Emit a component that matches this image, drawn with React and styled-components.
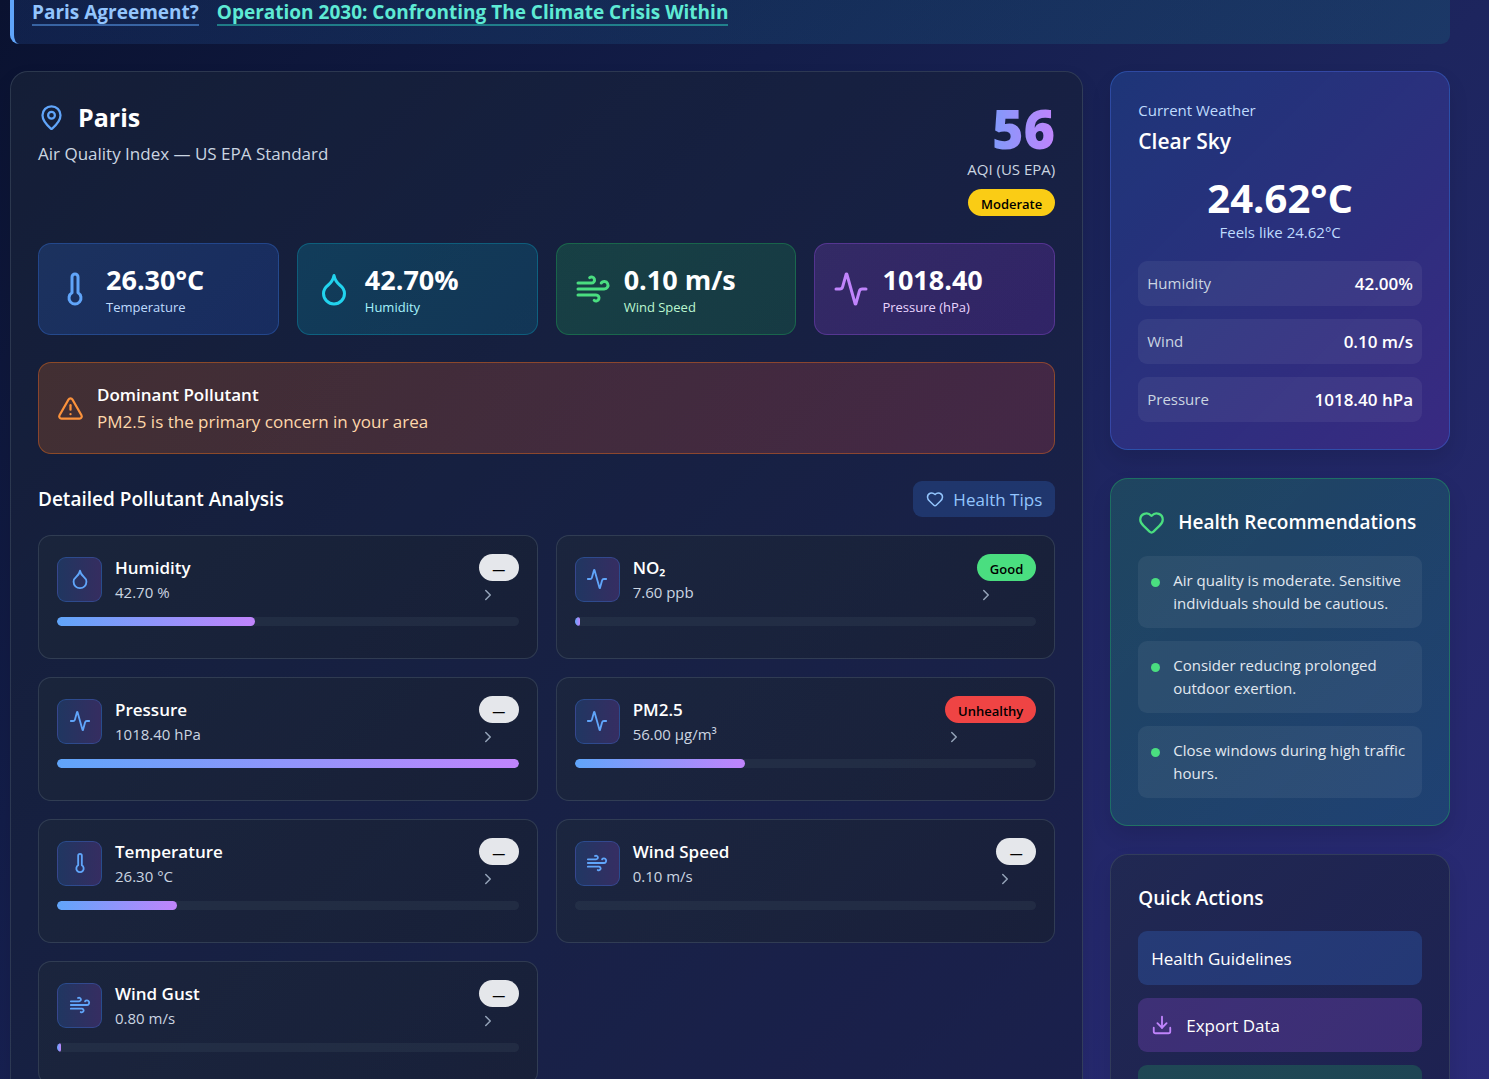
import React from "react";
import styled, { createGlobalStyle, css } from "styled-components";
import {
  Activity,
  ChevronRight,
  Download,
  Droplet,
  Heart,
  MapPin,
  Thermometer,
  TriangleAlert,
  Wind,
} from "lucide-react";

const GlobalStyle = createGlobalStyle`
  *, *::before, *::after { box-sizing: border-box; }
  body {
    margin: 0;
    background: #0a1230;
    color: #fff;
    font-family: "Segoe UI", "Open Sans", "Noto Sans", sans-serif;
    font-size: 17px;
    line-height: 27px;
  }
  h1, h2, h3, p, ul, dl, dd { margin: 0; padding: 0; }
  ul { list-style: none; }
  button { font: inherit; border: 0; cursor: pointer; }
  svg { flex: none; display: block; }
`;

const Page = styled.div`
  height: 100vh;
  overflow: hidden;
  padding: 0 39px 0 10px;
  background: linear-gradient(135deg, #0a1230 0%, #131d49 32%, #1d255e 58%, #2b2b78 100%);
`;

const Banner = styled.nav`
  display: flex;
  gap: 18px;
  padding: 0 18px 18px;
  margin-bottom: 27px;
  border-left: 4px solid #60a5fa;
  border-radius: 0 0 9px 9px;
  background: linear-gradient(90deg, rgba(59, 130, 246, 0.13), rgba(20, 184, 166, 0.13));
`;

const BannerLink = styled.a`
  color: ${(p) => p.$color};
  border-bottom: 2px solid ${(p) => p.$line};
  font-size: 19px;
  line-height: 24px;
  font-weight: 700;
  text-decoration: none;
`;

const Layout = styled.main`
  display: grid;
  grid-template-columns: repeat(4, minmax(0, 1fr));
  gap: 27px;
  align-items: start;
`;

const Card = styled.section`
  padding: 27px;
  border: 1px solid ${(p) => p.$border};
  border-radius: 18px;
  background: linear-gradient(135deg, ${(p) => p.$from}, ${(p) => p.$to});
  box-shadow: 0 10px 20px rgba(0, 0, 0, 0.1);
`;

const slate = {
  $border: "rgba(71, 85, 105, 0.5)",
  $from: "rgba(30, 41, 59, 0.5)",
  $to: "rgba(15, 23, 42, 0.5)",
};

const MainCard = styled(Card)`
  grid-column: span 3;
`;

const Sidebar = styled.aside`
  display: flex;
  flex-direction: column;
  gap: 28px;
`;

const Header = styled.header`
  display: flex;
  justify-content: space-between;
  align-items: flex-start;
  margin-bottom: 27px;
`;

const City = styled.h1`
  display: flex;
  align-items: center;
  gap: 13px;
  margin-bottom: 5px;
  font-size: 25px;
  line-height: 36px;
  font-weight: 700;
  svg { color: #60a5fa; }
`;

const Subtitle = styled.p`
  color: #cbd5e1;
`;

const Score = styled.div`
  display: flex;
  flex-direction: column;
  align-items: flex-end;
`;

const ScoreValue = styled.div`
  font-size: 54px;
  line-height: 58px;
  font-weight: 800;
  background: linear-gradient(90deg, #60a5fa -50%, #c084fc 100%);
  background-clip: text;
  -webkit-background-clip: text;
  color: transparent;
`;

const ScoreLabel = styled.div`
  color: #cbd5e1;
  font-size: 15px;
  line-height: 24px;
  margin-bottom: 8px;
`;

const badgeTones = {
  moderate: "#facc15",
  good: "#4ade80",
  unhealthy: "#ef4444",
  none: "#e5e7eb",
};

const Badge = styled.span`
  display: inline-flex;
  align-items: center;
  justify-content: center;
  min-width: 40px;
  height: 27px;
  padding: 2px 13px 0;
  border-radius: 14px;
  background: ${(p) => badgeTones[p.$tone]};
  color: #000;
  font-size: 13px;
  line-height: 18px;
  font-weight: 600;
`;

const StatGrid = styled.div`
  display: grid;
  grid-template-columns: repeat(4, minmax(0, 1fr));
  gap: 18px;
  margin-bottom: 27px;
`;

const stats = {
  blue: ["59, 130, 246", "37, 99, 235", "#60a5fa", "#bfdbfe"],
  cyan: ["6, 182, 212", "8, 145, 178", "#22d3ee", "#a5f3fc"],
  green: ["34, 197, 94", "22, 163, 74", "#4ade80", "#bbf7d0"],
  purple: ["168, 85, 247", "147, 51, 234", "#c084fc", "#e9d5ff"],
};

const Stat = styled.div`
  display: flex;
  align-items: center;
  gap: 13px;
  padding: 18px;
  border-radius: 13px;
  ${(p) => {
    const [from, to, icon] = stats[p.$tone];
    return css`
      border: 1px solid rgba(${from}, 0.3);
      background: linear-gradient(135deg, rgba(${from}, 0.2), rgba(${to}, 0.2));
      svg { color: ${icon}; }
    `;
  }}
`;

const StatValue = styled.div`
  font-size: 27px;
  line-height: 36px;
  font-weight: 700;
`;

const StatLabel = styled.div`
  color: ${(p) => stats[p.$tone][3]};
  font-size: 13px;
  line-height: 18px;
`;

const Alert = styled.div`
  display: flex;
  align-items: center;
  gap: 13px;
  padding: 18px;
  margin-bottom: 27px;
  border: 1px solid rgba(249, 115, 22, 0.4);
  border-radius: 13px;
  background: linear-gradient(90deg, rgba(249, 115, 22, 0.2), rgba(239, 68, 68, 0.2));
  svg { color: #fb923c; }
`;

const AlertTitle = styled.h3`
  font-size: 17px;
  line-height: 27px;
  font-weight: 600;
`;

const AlertText = styled.p`
  color: #fed7aa;
`;

const SectionHead = styled.div`
  display: flex;
  justify-content: space-between;
  align-items: center;
  margin-bottom: 18px;
`;

const SectionTitle = styled.h2`
  font-size: 19px;
  line-height: 32px;
  font-weight: 600;
`;

const TipsButton = styled.button`
  display: flex;
  align-items: center;
  gap: 9px;
  height: 36px;
  padding: 0 13px;
  border-radius: 9px;
  background: rgba(59, 130, 246, 0.22);
  color: #93c5fd;
`;

const PollutantGrid = styled.div`
  display: grid;
  grid-template-columns: repeat(2, minmax(0, 1fr));
  gap: 18px;
`;

const Pollutant = styled.article`
  padding: 18px 18px 32px;
  border: 1px solid rgba(71, 85, 105, 0.5);
  border-radius: 13px;
  background: linear-gradient(135deg, rgba(30, 41, 59, 0.6), rgba(24, 32, 48, 0.6));
`;

const PollutantTop = styled.div`
  display: flex;
  align-items: center;
  gap: 13px;
  margin-bottom: 13px;
`;

const IconBox = styled.div`
  display: grid;
  place-items: center;
  width: 45px;
  height: 45px;
  border: 1px solid rgba(59, 130, 246, 0.3);
  border-radius: 9px;
  background: linear-gradient(90deg, rgba(59, 130, 246, 0.2), rgba(168, 85, 247, 0.2));
  color: #60a5fa;
`;

const PollutantText = styled.div`
  flex: 1;
`;

const PollutantName = styled.h3`
  font-size: 17px;
  line-height: 27px;
  font-weight: 600;
`;

const PollutantValue = styled.p`
  color: #cbd5e1;
  font-size: 15px;
  line-height: 23px;
`;

const PollutantSide = styled.div`
  display: flex;
  flex-direction: column;
  gap: 5px;
  color: #94a3b8;
`;

const Track = styled.div`
  height: 9px;
  border-radius: 5px;
  overflow: hidden;
  background: rgba(51, 65, 85, 0.35);
`;

const Fill = styled.div`
  height: 100%;
  border-radius: 5px;
  background: linear-gradient(90deg, #60a5fa, #c084fc);
`;

const Caption = styled.p`
  color: #bfdbfe;
  font-size: 15px;
  line-height: 23px;
`;

const Condition = styled.h2`
  margin: 3px 0 18px;
  font-size: 21px;
  line-height: 32px;
  font-weight: 600;
`;

const Reading = styled.div`
  margin-bottom: 17px;
  text-align: center;
`;

const ReadingValue = styled.div`
  font-size: 40px;
  line-height: 46px;
  font-weight: 700;
`;

const Details = styled.dl`
  display: flex;
  flex-direction: column;
  gap: 13px;
`;

const Detail = styled.div`
  display: flex;
  justify-content: space-between;
  align-items: center;
  height: 45px;
  padding: 0 9px;
  border-radius: 9px;
  background: rgba(255, 255, 255, 0.06);
`;

const DetailName = styled.dt`
  color: #cbd5e1;
  font-size: 15px;
`;

const DetailValue = styled.dd`
  font-weight: 600;
`;

const AdviceHead = styled.div`
  display: flex;
  align-items: center;
  gap: 13px;
  margin-bottom: 18px;
  svg { color: #4ade80; }
`;

const AdviceList = styled.ul`
  display: flex;
  flex-direction: column;
  gap: 13px;
`;

const Advice = styled.li`
  display: flex;
  gap: 13px;
  padding: 13px;
  border-radius: 9px;
  background: rgba(255, 255, 255, 0.06);
  color: #e2e8f0;
  font-size: 15px;
  line-height: 23px;
  &::before {
    content: "";
    flex: none;
    width: 9px;
    height: 9px;
    margin-top: 9px;
    border-radius: 50%;
    background: #4ade80;
  }
`;

const ActionList = styled.div`
  display: flex;
  flex-direction: column;
  gap: 13px;
  margin-top: 17px;
`;

const Action = styled.button`
  display: flex;
  align-items: center;
  gap: 13px;
  height: 54px;
  padding: 0 13px;
  border-radius: 9px;
  background: rgba(${(p) => p.$rgb}, 0.22);
  color: #fff;
  text-align: left;
  svg { color: ${(p) => p.$icon}; }
`;

const summary = [
  { tone: "blue", Icon: Thermometer, value: "26.30°C", label: "Temperature" },
  { tone: "cyan", Icon: Droplet, value: "42.70%", label: "Humidity" },
  { tone: "green", Icon: Wind, value: "0.10 m/s", label: "Wind Speed" },
  { tone: "purple", Icon: Activity, value: "1018.40", label: "Pressure (hPa)" },
];

const pollutants = [
  { name: "Humidity", value: "42.70 %", Icon: Droplet, fill: 43, tone: "none", status: "—" },
  { name: "NO₂", value: "7.60 ppb", Icon: Activity, fill: 1.1, tone: "good", status: "Good" },
  { name: "Pressure", value: "1018.40 hPa", Icon: Activity, fill: 100, tone: "none", status: "—" },
  { name: "PM2.5", value: "56.00 µg/m³", Icon: Activity, fill: 37, tone: "unhealthy", status: "Unhealthy" },
  { name: "Temperature", value: "26.30 °C", Icon: Thermometer, fill: 26, tone: "none", status: "—" },
  { name: "Wind Speed", value: "0.10 m/s", Icon: Wind, fill: 0, tone: "none", status: "—" },
  { name: "Wind Gust", value: "0.80 m/s", Icon: Wind, fill: 0.9, tone: "none", status: "—" },
];

const weather = [
  ["Humidity", "42.00%"],
  ["Wind", "0.10 m/s"],
  ["Pressure", "1018.40 hPa"],
];

const advice = [
  "Air quality is moderate. Sensitive individuals should be cautious.",
  "Consider reducing prolonged outdoor exertion.",
  "Close windows during high traffic hours.",
];

export default function App() {
  return (
    <>
      <GlobalStyle />
      <Page>
        <Banner>
          <BannerLink href="#paris" $color="#93c5fd" $line="rgba(96, 165, 250, 0.5)">
            Paris Agreement?
          </BannerLink>
          <BannerLink href="#operation" $color="#5eead4" $line="rgba(45, 212, 191, 0.5)">
            Operation 2030: Confronting The Climate Crisis Within
          </BannerLink>
        </Banner>

        <Layout>
          <MainCard {...slate}>
            <Header>
              <div>
                <City>
                  <MapPin size={27} />
                  Paris
                </City>
                <Subtitle>Air Quality Index — US EPA Standard</Subtitle>
              </div>
              <Score>
                <ScoreValue>56</ScoreValue>
                <ScoreLabel>AQI (US EPA)</ScoreLabel>
                <Badge $tone="moderate">Moderate</Badge>
              </Score>
            </Header>

            <StatGrid>
              {summary.map(({ tone, Icon, value, label }) => (
                <Stat key={label} $tone={tone}>
                  <Icon size={36} />
                  <div>
                    <StatValue>{value}</StatValue>
                    <StatLabel $tone={tone}>{label}</StatLabel>
                  </div>
                </Stat>
              ))}
            </StatGrid>

            <Alert>
              <TriangleAlert size={27} />
              <div>
                <AlertTitle>Dominant Pollutant</AlertTitle>
                <AlertText>PM2.5 is the primary concern in your area</AlertText>
              </div>
            </Alert>

            <SectionHead>
              <SectionTitle>Detailed Pollutant Analysis</SectionTitle>
              <TipsButton type="button">
                <Heart size={18} />
                Health Tips
              </TipsButton>
            </SectionHead>

            <PollutantGrid>
              {pollutants.map(({ name, value, Icon, fill, tone, status }) => (
                <Pollutant key={name}>
                  <PollutantTop>
                    <IconBox>
                      <Icon size={22} />
                    </IconBox>
                    <PollutantText>
                      <PollutantName>{name}</PollutantName>
                      <PollutantValue>{value}</PollutantValue>
                    </PollutantText>
                    <PollutantSide>
                      <Badge $tone={tone}>{status}</Badge>
                      <ChevronRight size={18} />
                    </PollutantSide>
                  </PollutantTop>
                  <Track>
                    <Fill style={{ width: `${fill}%` }} />
                  </Track>
                </Pollutant>
              ))}
            </PollutantGrid>
          </MainCard>

          <Sidebar>
            <Card
              $border="rgba(59, 130, 246, 0.35)"
              $from="rgba(48, 120, 240, 0.23)"
              $to="rgba(147, 51, 234, 0.2)"
            >
              <Caption>Current Weather</Caption>
              <Condition>Clear Sky</Condition>
              <Reading>
                <ReadingValue>24.62°C</ReadingValue>
                <Caption>Feels like 24.62°C</Caption>
              </Reading>
              <Details>
                {weather.map(([name, value]) => (
                  <Detail key={name}>
                    <DetailName>{name}</DetailName>
                    <DetailValue>{value}</DetailValue>
                  </Detail>
                ))}
              </Details>
            </Card>

            <Card
              $border="rgba(34, 197, 94, 0.35)"
              $from="rgba(34, 197, 94, 0.2)"
              $to="rgba(5, 150, 125, 0.22)"
            >
              <AdviceHead>
                <Heart size={27} />
                <SectionTitle>Health Recommendations</SectionTitle>
              </AdviceHead>
              <AdviceList>
                {advice.map((text) => (
                  <Advice key={text}>{text}</Advice>
                ))}
              </AdviceList>
            </Card>

            <Card {...slate}>
              <SectionTitle>Quick Actions</SectionTitle>
              <ActionList>
                <Action type="button" $rgb="59, 130, 246">
                  Health Guidelines
                </Action>
                <Action type="button" $rgb="168, 85, 247" $icon="#c084fc">
                  <Download size={22} />
                  Export Data
                </Action>
                <Action type="button" $rgb="34, 197, 94" aria-label="Share" />
              </ActionList>
            </Card>
          </Sidebar>
        </Layout>
      </Page>
    </>
  );
}
